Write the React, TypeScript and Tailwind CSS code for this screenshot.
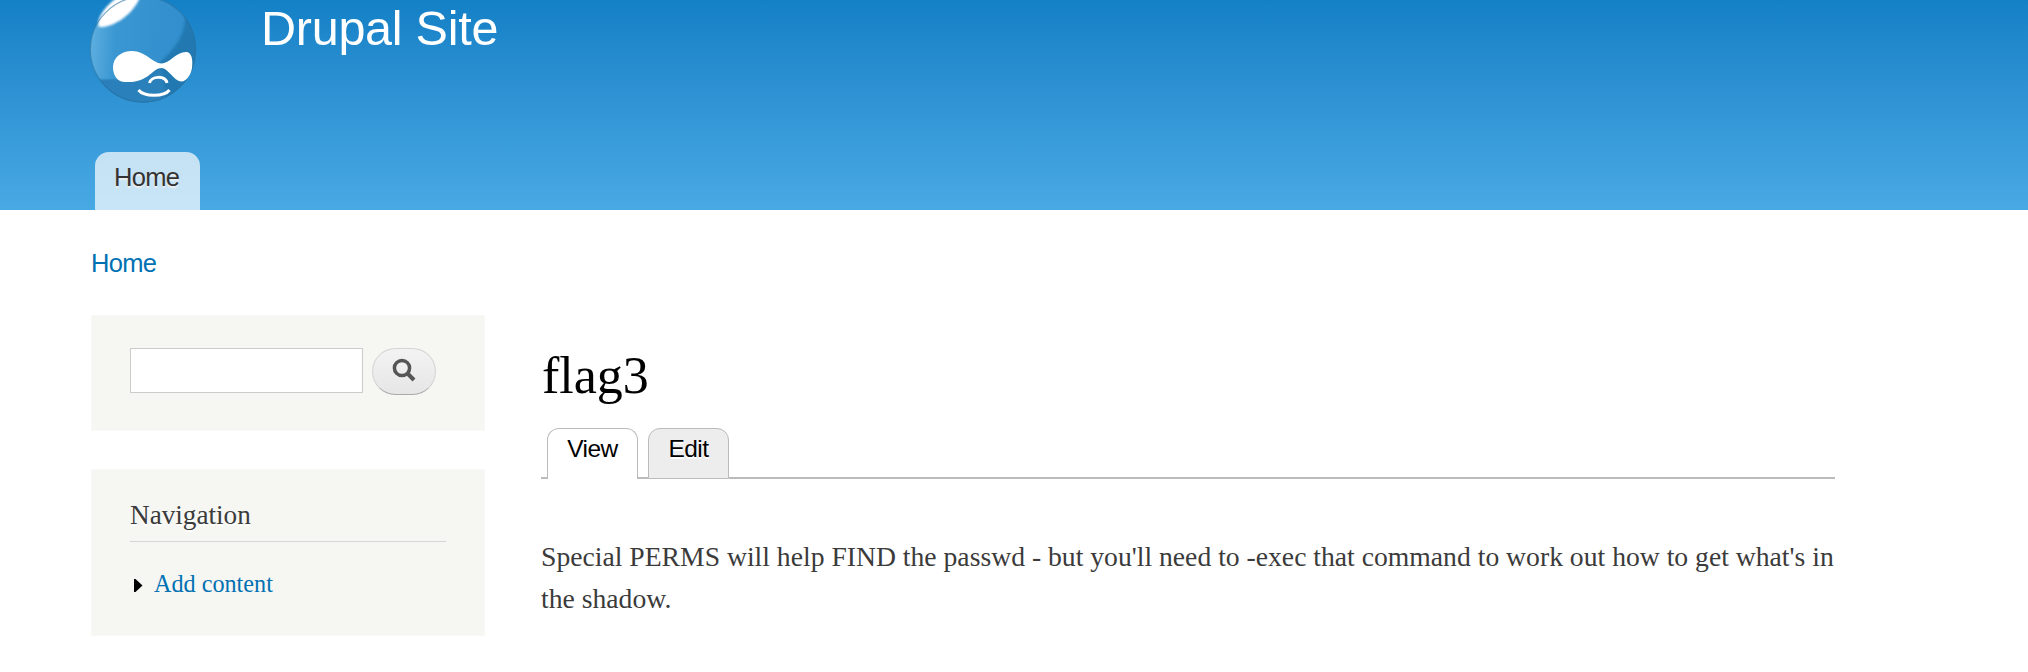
function Logo() {
  return (
    <svg className="block" width="108" height="104" viewBox="0 0 108 104" fill="none">
      <defs>
        <linearGradient id="ball" x1="0" y1="45" x2="85" y2="50" gradientUnits="userSpaceOnUse">
          <stop offset="0" stopColor="#5fb0e0" />
          <stop offset="0.3" stopColor="#3b97d2" />
          <stop offset="1" stopColor="#338fcd" />
        </linearGradient>
        <clipPath id="round"><circle cx="54" cy="49.500" r="53" /></clipPath>
        <filter id="soft" x="-20%" y="-20%" width="140%" height="140%"><feGaussianBlur stdDeviation="1.1" /></filter>
        <filter id="fine" x="-20%" y="-20%" width="140%" height="140%"><feGaussianBlur stdDeviation="0.5" /></filter>
      </defs>
      <g clipPath="url(#round)">
        <rect width="108" height="104" fill="url(#ball)" />
        <path d="M96 14C97 36 84 51 70 63L46 80L2 80L2 104H108V10Z" fill="#2279b2" filter="url(#soft)" />
        <path d="M0 80C30 82 55 79 72 68L78 104H0Z" fill="#2a80ba" filter="url(#soft)" />
      </g>
      <path d="M10 27C6 18 20 1 33-5L51-3C45 14 24 28 10 27Z" fill="#fff" filter="url(#soft)" />
      <circle cx="54" cy="49.500" r="52.600" stroke="#246f9f" strokeOpacity="0.6" strokeWidth="1.200" />
      <g filter="url(#fine)">
        <path d="M24 67C24 57 33 51 43 51C57 51 64 64 73 63.500C81 63 87 52 97 52C103 52 104 60 103 68C102 75 97 82 92 81.500C85 81 79 68 72.500 68C64 68 61 80 43 82H36C29 82 24 76 24 67Z" fill="#fff" />
        <path d="M60.500 83C62 76 76 75 78 83M49.500 90C55 97 75 97 80.500 90" stroke="#fff" strokeWidth="3" />
      </g>
    </svg>
  );
}

export default function App() {
  return (
    <div className="h-[672px] w-[2028px] overflow-hidden bg-white font-['Liberation_Serif',serif] text-[#3b3b3b]">
      <header className="flex h-[210px] flex-col justify-between bg-linear-to-b from-[#1380c6] to-[#48a9e4] pl-[89px] font-['Liberation_Sans',sans-serif]">
        <div className="flex">
          <Logo />
          <div className="ml-[64px] text-[48.5px] leading-[56px] tracking-[-0.25px] whitespace-nowrap text-white">Drupal Site</div>
        </div>
        <nav className="ml-[6px] h-[58px] w-[105px] rounded-t-[14px] bg-white/70 pl-[19px] text-[25.5px] leading-[50px] tracking-[-0.7px] text-[#333] [text-shadow:0_2px_1px_#eee]">
          Home
        </nav>
      </header>
      <div className="mt-[38px] h-[32px] pl-[91px] font-['Liberation_Sans',sans-serif] text-[25.5px] leading-[31px] tracking-[-0.7px] text-[#0071b3]">Home</div>
      <div className="mt-[35px] flex pl-[91px]">
        <aside className="w-[394px]">
          <section className="flex h-[116px] border border-[#f9f9f9] bg-[#f6f6f2] pt-8 pl-[38px]">
            <div className="h-[45px] w-[233px] border border-[#ccc] bg-white" />
            <button className="ml-[9px] flex h-[47px] w-[64px] justify-center rounded-[24px] border border-[#d4d4d4] border-b-[#aaa] bg-linear-to-b from-[#f3f3f3] to-[#e6e6e6] pt-[9px]">
              <svg width="24" height="24" viewBox="0 0 24 24" fill="none" stroke="#555">
                <circle cx="10" cy="10" r="7.600" strokeWidth="3.500" />
                <path d="M15.500 15.500L22 22" strokeWidth="4" />
              </svg>
            </button>
          </section>
          <section className="mt-[38px] h-[167px] border border-[#f9f9f9] bg-[#f6f6f2] px-[38px] pt-[28px]">
            <h2 className="h-[44px] border-b border-[#d6d6d6] text-[27.2px] leading-[34px] [text-shadow:0_2px_0_#fff]">Navigation</h2>
            <div className="mt-[26px] flex items-center pl-[4px] text-[24.2px] leading-[32px] text-[#0071b3]">
              <svg className="mt-[3px] mr-[11px]" width="9" height="13" viewBox="0 0 9 13"><path d="M0 0H1.500L8.500 6.500L1.500 13H0Z" fill="#000" /></svg>
              Add content
            </div>
          </section>
        </aside>
        <main className="ml-[56px] w-[1294px]">
          <h1 className="mt-[31px] h-[60px] pl-px text-[52px] leading-[60px] text-black">flag3</h1>
          <div className="mt-[22px] flex h-[51px] items-end font-['Liberation_Sans',sans-serif] text-[24.5px] leading-[39px] tracking-[-0.5px] text-black">
            <div className="h-[2px] w-[6px] bg-[#bbb]" />
            <div className="h-[51px] w-[91px] rounded-t-[12px] border border-b-0 border-[#bbb] text-center">View</div>
            <div className="h-[2px] w-[10px] bg-[#bbb]" />
            <div className="h-[51px] w-[81px] rounded-t-[12px] border border-[#bbb] bg-[#ededed] text-center [text-shadow:0_2px_0_#fff]">Edit</div>
            <div className="h-[2px] flex-1 bg-[#bbb]" />
          </div>
          <p className="mt-[57px] text-[27.66px] leading-[42px] whitespace-nowrap">
            Special PERMS will help FIND the passwd - but you'll need to -exec that command to work out how to get what's in
            <br />
            the shadow.
          </p>
        </main>
      </div>
    </div>
  );
}
